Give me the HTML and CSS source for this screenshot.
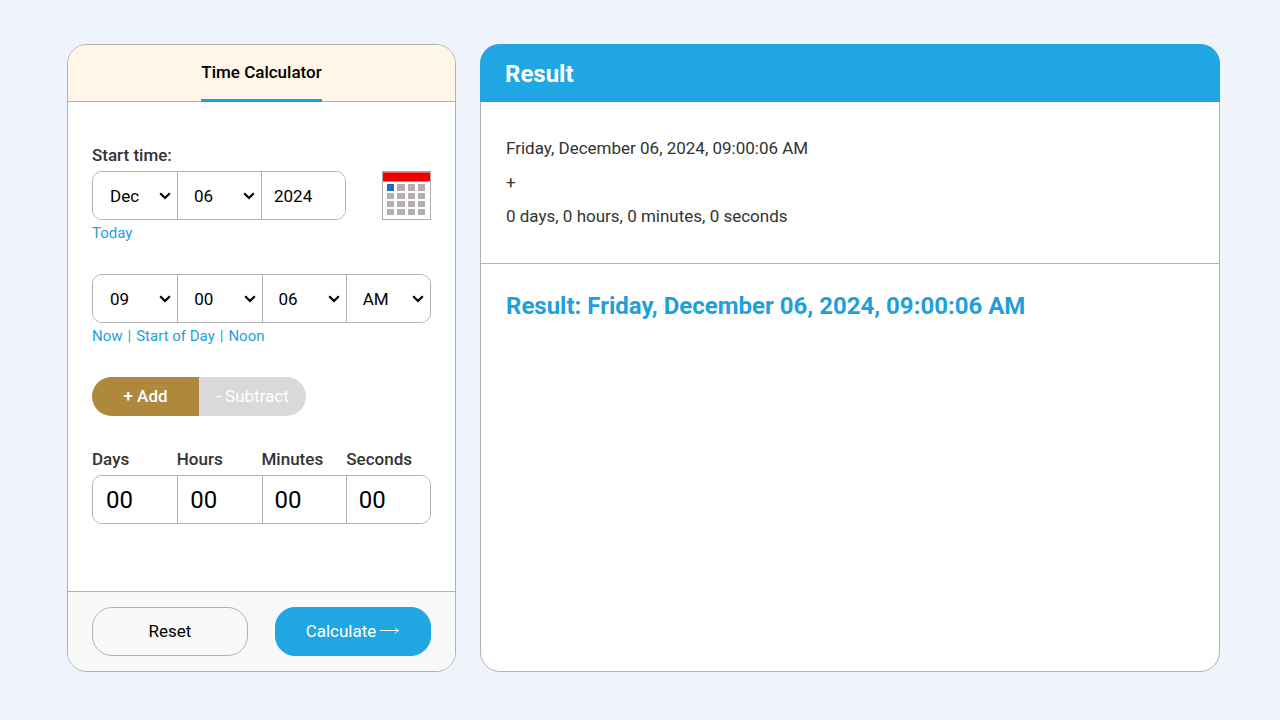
FILE: index.html
```html
<!DOCTYPE html>
<html lang="en">
<head>
<meta charset="utf-8">
<meta name="viewport" content="width=device-width, initial-scale=1">
<title>Time Calculator</title>
<link rel="stylesheet" href="styles.css">
</head>
<body>
<main class="page">
  <form class="card calculator">
    <header class="tabs"><h1 class="tab">Time Calculator</h1></header>
    <div class="fields">
      <fieldset class="group">
        <legend class="label">Start time:</legend>
        <div class="date-row">
          <div class="cells cells-date">
            <select class="cell" aria-label="Month"><option>Dec</option></select>
            <select class="cell" aria-label="Day"><option>06</option></select>
            <input class="cell" type="text" value="2024" aria-label="Year">
          </div>
          <button class="calendar" type="button" aria-label="Choose date">
            <svg width="49" height="49" viewBox="0 0 49 49" shape-rendering="crispEdges">
              <rect x="0.5" y="0.5" width="48" height="48" fill="#fff" stroke="#b3abab"/>
              <rect x="1" y="2" width="47" height="8" fill="#f20000"/>
              <rect x="1" y="1" width="47" height="1" fill="#e86060"/>
              <rect x="1" y="10" width="47" height="1" fill="#b89090"/>
              <rect x="5" y="13" width="7" height="7" fill="#1b6fbd"/>
              <path fill="#b3afaf" d="M15 13h8v7h-8zM26 13h7v7h-7zM36 13h7v7h-7zM5 22h7v6h-7zM15 22h8v6h-8zM26 22h7v6h-7zM36 22h7v6h-7zM5 30h7v6h-7zM15 30h8v6h-8zM26 30h7v6h-7zM36 30h7v6h-7zM5 38h7v6h-7zM15 38h8v6h-8zM26 38h7v6h-7zM36 38h7v6h-7z"/>
            </svg>
          </button>
        </div>
        <div class="links"><a href="#today">Today</a></div>
      </fieldset>
      <div class="group">
        <div class="cells">
          <select class="cell" aria-label="Hour"><option>09</option></select>
          <select class="cell" aria-label="Minute"><option>00</option></select>
          <select class="cell" aria-label="Second"><option>06</option></select>
          <select class="cell" aria-label="AM or PM"><option>AM</option><option>PM</option></select>
        </div>
        <div class="links"><a href="#now">Now</a><span>|</span><a href="#start">Start of Day</a><span>|</span><a href="#noon">Noon</a></div>
      </div>
      <div class="toggle">
        <button class="toggle-option selected" type="button">+ Add</button>
        <button class="toggle-option" type="button">- Subtract</button>
      </div>
      <div class="group">
        <div class="labels">
          <label class="label" for="days">Days</label>
          <label class="label" for="hours">Hours</label>
          <label class="label" for="minutes">Minutes</label>
          <label class="label" for="seconds">Seconds</label>
        </div>
        <div class="cells cells-large">
          <input class="cell" id="days" type="text" value="00">
          <input class="cell" id="hours" type="text" value="00">
          <input class="cell" id="minutes" type="text" value="00">
          <input class="cell" id="seconds" type="text" value="00">
        </div>
      </div>
    </div>
    <footer class="actions">
      <button class="button" type="reset">Reset</button>
      <button class="button primary" type="button">Calculate
        <svg width="20" height="9" viewBox="0 0 20 9" fill="none" stroke="currentColor"><path d="M0 4.500H18.500M15 1.500C16 3 17 4 19 4.500C17 5 16 6 15 7.500"/></svg>
      </button>
    </footer>
  </form>
  <section class="card result">
    <h2 class="result-title">Result</h2>
    <div class="summary">
      <p>Friday, December 06, 2024, 09:00:06 AM</p>
      <p>+</p>
      <p>0 days, 0 hours, 0 minutes, 0 seconds</p>
    </div>
    <p class="answer">Result: Friday, December 06, 2024, 09:00:06 AM</p>
  </section>
</main>
</body>
</html>
```
FILE: styles.css
```css
* {
  box-sizing: border-box;
}

body {
  margin: 0;
  background: #eff4fc;
  color: #333;
  font: 17px/20px Roboto, sans-serif;
}

h1, h2, p, fieldset {
  margin: 0;
}

button, input, select {
  font: inherit;
  color: #000;
}

.page {
  display: grid;
  grid-template-columns: 389fr 740fr;
  gap: 24px;
  min-height: 100vh;
  padding: 44px 60px 48px 67px;
}

.card {
  display: flex;
  flex-direction: column;
  min-width: 0;
  border: 1px solid #b2b2b2;
  border-radius: 20px;
  background: #fff;
}

.calculator {
  overflow: hidden;
}

.tabs {
  display: flex;
  justify-content: center;
  border-bottom: 1px solid #b2b2b2;
  background: #fff6e8;
}

.tab {
  margin-bottom: -1px;
  padding: 17px 0;
  border-bottom: 3px solid #1f9fdb;
  color: #000;
  font-size: 17px;
  line-height: 20px;
  font-weight: 500;
}

.fields {
  flex: 1;
  padding: 43px 24px 24px;
}

.group {
  min-width: 0;
  padding: 0;
  border: 0;
}

.label {
  padding: 0;
  font-weight: 500;
  line-height: 20px;
}

.date-row {
  display: flex;
  justify-content: space-between;
  margin-top: 6px;
}

.cells {
  display: grid;
  grid-template-columns: repeat(4, 1fr);
  height: 49px;
  border: 1px solid #b2b2b2;
  border-radius: 10px;
  overflow: hidden;
}

.cells-date {
  flex: 0 1 254px;
  grid-template-columns: repeat(3, 1fr);
}

.cell {
  min-width: 0;
  width: 100%;
  padding: 0 0 0 12px;
  border: 0;
  border-radius: 0;
  background: #fff;
}

select.cell {
  appearance: none;
  padding: 0 20px 0 16px;
  background: #fff url("data:image/svg+xml,%3Csvg xmlns='http://www.w3.org/2000/svg' width='12' height='8' viewBox='0 0 12 8'%3E%3Cpath d='M1.200 1.300L6 6L10.800 1.300' fill='none' stroke='%23000' stroke-width='2.200'/%3E%3C/svg%3E") no-repeat right 6px center;
}

.cell:first-child {
  padding-left: 13px;
}

select.cell:first-child {
  padding-left: 17px;
}

.cell + .cell {
  border-left: 1px solid #b2b2b2;
}

.cells-large .cell {
  font-size: 24px;
}

.calendar {
  display: flex;
  padding: 0;
  border: 0;
  background: none;
}

.links {
  display: flex;
  gap: 5px;
  margin: 3px 0 31px;
  color: #1f9fdb;
  font-size: 15px;
  line-height: 20px;
}

.links a {
  color: inherit;
  text-decoration: none;
}

.toggle {
  display: grid;
  grid-template-columns: 1fr 1fr;
  width: 214px;
  margin-bottom: 33px;
  border-radius: 20px;
  overflow: hidden;
}

.toggle-option {
  height: 39px;
  padding: 0 0 2px;
  border: 0;
  background: #d9d9d9;
  color: #fff;
}

.toggle-option.selected {
  background: #ae883c;
  font-weight: 500;
}

.labels {
  display: grid;
  grid-template-columns: repeat(4, 1fr);
  margin-bottom: 6px;
}

.actions {
  display: grid;
  grid-template-columns: 1fr 1fr;
  gap: 27px;
  padding: 15px 24px;
  border-top: 1px solid #b2b2b2;
  background: #f9f9f9;
}

.button {
  display: flex;
  align-items: center;
  justify-content: center;
  gap: 4px;
  height: 49px;
  padding: 0 0 2px;
  border: 1px solid #b2b2b2;
  border-radius: 20px;
  background: #f9f9f9;
}

.button.primary {
  border-color: #1fa6e3;
  background: #1fa6e3;
  color: #fff;
}

.result-title {
  margin: -1px -1px 0;
  padding: 16px 25px 14px;
  border-radius: 20px 20px 0 0;
  background: #1fa6e3;
  color: #fff;
  font-size: 24px;
  line-height: 28px;
  font-weight: 700;
}

.summary {
  padding: 29px 25px 30px;
  border-bottom: 1px solid #b2b2b2;
  line-height: 34px;
}

.answer {
  padding: 28px 25px;
  color: #1f9fdb;
  font-size: 24px;
  line-height: 28px;
  font-weight: 700;
}
```
